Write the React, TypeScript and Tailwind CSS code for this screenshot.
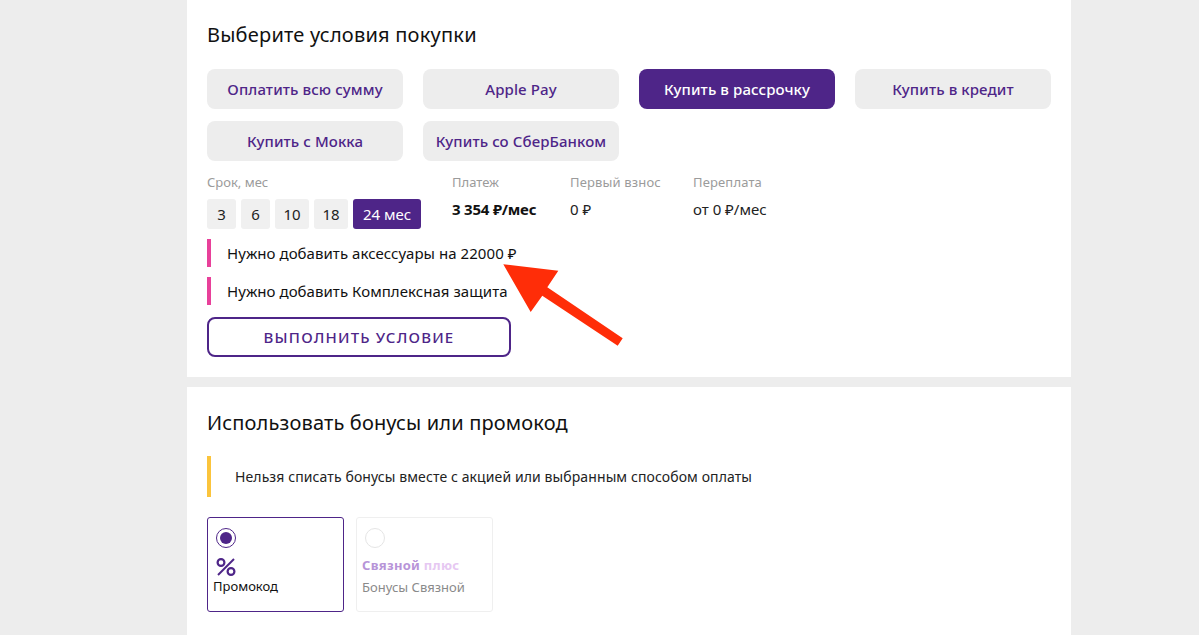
import React from 'react';

const font = { fontFamily: '"Noto Sans", "Open Sans", sans-serif' };

const methods = [
  'Оплатить всю сумму',
  'Apple Pay',
  'Купить в рассрочку',
  'Купить в кредит',
  'Купить с Мокка',
  'Купить со СберБанком',
];

const App = () => {
  return (
    <div className="relative h-[635px] overflow-hidden bg-[#ededed]" style={font}>
      <div className="ml-[187px] flex w-[884px] flex-col gap-[10px]">
        <section className="h-[377px] bg-white px-5 pt-[21px]">
          <h2 className="text-[20px] leading-[28px] tracking-[0.22px] text-[#111]">Выберите условия покупки</h2>

          <div className="mt-[20px] grid grid-cols-[196px_196px_196px_196px] gap-x-5 gap-y-3">
            {methods.map((m, i) => (
              <button
                key={m}
                className={
                  i === 2
                    ? 'h-10 rounded-lg bg-[#4e2588] text-[15px] font-medium tracking-[0.1px] text-white'
                    : 'h-10 rounded-lg bg-[#ededed] text-[15px] font-medium tracking-[0.1px] text-[#4e2588]'
                }
              >
                {m}
              </button>
            ))}
          </div>

          <div className="mt-[12px] flex">
            <div className="w-[245px]">
              <div className="text-[13px] leading-[18px] text-[#9b9b9b]">Срок, мес</div>
              <div className="mt-[8px] flex gap-[5px]">
                <div className="flex h-[30px] w-[29px] items-center justify-center rounded-[3px] bg-[#f0f0f0] text-[15px] text-[#222]">3</div>
                <div className="flex h-[30px] w-[29px] items-center justify-center rounded-[3px] bg-[#f0f0f0] text-[15px] text-[#222]">6</div>
                <div className="flex h-[30px] w-[34px] items-center justify-center rounded-[3px] bg-[#f0f0f0] text-[15px] text-[#222]">10</div>
                <div className="flex h-[30px] w-[34px] items-center justify-center rounded-[3px] bg-[#f0f0f0] text-[15px] text-[#222]">18</div>
                <div className="flex h-[30px] w-[68px] items-center justify-center rounded-[3px] bg-[#4e2588] text-[15px] text-white">24 мес</div>
              </div>
            </div>
            <div className="w-[118px]">
              <div className="text-[13px] leading-[18px] text-[#9b9b9b]">Платеж</div>
              <div className="mt-[9px] text-[15px] leading-[18px] font-bold tracking-[-0.2px] text-[#111]">3 354 ₽/мес</div>
            </div>
            <div className="w-[123px]">
              <div className="text-[13px] leading-[18px] tracking-[0.15px] text-[#9b9b9b]">Первый взнос</div>
              <div className="mt-[9px] text-[15px] leading-[18px] text-[#222]">0 ₽</div>
            </div>
            <div>
              <div className="text-[13px] leading-[18px] tracking-[0.15px] text-[#9b9b9b]">Переплата</div>
              <div className="mt-[9px] text-[15px] leading-[18px] text-[#222]">от 0 ₽/мес</div>
            </div>
          </div>

          <div className="mt-[10px] flex flex-col gap-[10px]">
            <div className="flex h-7 items-center border-l-4 border-[#e8409a] pl-4 text-[15px] tracking-[0.05px] text-[#111]">
              Нужно добавить аксессуары на 22000 ₽
            </div>
            <div className="flex h-7 items-center border-l-4 border-[#e8409a] pl-4 text-[15px] tracking-[0.05px] text-[#111]">
              Нужно добавить Комплексная защита
            </div>
          </div>

          <button className="mt-[12px] h-10 w-[304px] rounded-lg border-2 border-[#4e2588] bg-white text-[15px] font-medium tracking-[1.2px] text-[#4e2588]">
            ВЫПОЛНИТЬ УСЛОВИЕ
          </button>
        </section>

        <section className="h-[248px] bg-white px-5 pt-[22px]">
          <h2 className="text-[20px] leading-[28px] tracking-[0.15px] text-[#111]">Использовать бонусы или промокод</h2>

          <div className="mt-[19px] flex h-[41px] items-center border-l-4 border-[#fbc43c] pl-6 text-[14px] tracking-[0.1px] text-[#222]">
            Нельзя списать бонусы вместе с акцией или выбранным способом оплаты
          </div>

          <div className="mt-5 flex gap-3">
            <div className="h-[95px] w-[137px] rounded-[3px] border border-[#4e2588] pt-[10px] pl-[5px]">
              <div className="ml-[3px] flex h-5 w-5 items-center justify-center rounded-full border border-[#4e2588]">
                <div className="h-3 w-3 rounded-full bg-[#4e2588]" />
              </div>
              <svg className="mt-[10px] ml-[3px]" width="20" height="18" viewBox="0 0 20 18" fill="none" stroke="#4e2588" strokeWidth="2.2">
                <circle cx="5" cy="4.5" r="3.4" />
                <circle cx="15" cy="13.5" r="3.4" />
                <path d="M2 17L18 1" strokeWidth="2" />
              </svg>
              <div className="mt-[1px] text-[13px] leading-[18px] text-[#111]">Промокод</div>
            </div>
            <div className="h-[95px] w-[137px] rounded-[3px] border border-[#efefef] pt-[10px] pl-[5px]">
              <div className="ml-[3px] h-5 w-5 rounded-full border border-[#e5e5e5]" />
              <div className="mt-[8px] text-[13px] leading-[18px] font-bold tracking-[0.3px]">
                <span className="text-[#b794d8]">Связной</span> <span className="text-[#e6c8f2]">плюс</span>
              </div>
              <div className="mt-[4px] text-[13px] leading-[18px] text-[#8a8a8a]">Бонусы Связной</div>
            </div>
          </div>
        </section>
      </div>

      <svg className="absolute top-0 left-0" width="1199" height="635" viewBox="0 0 1199 635">
        <path d="M503.3 264.3L558.3 270.7L547.3 287.3L622.7 338.3L617.7 345.7L542.3 295.7L530.7 312Z" fill="#ff2d08" />
      </svg>
    </div>
  );
};

export default App;
